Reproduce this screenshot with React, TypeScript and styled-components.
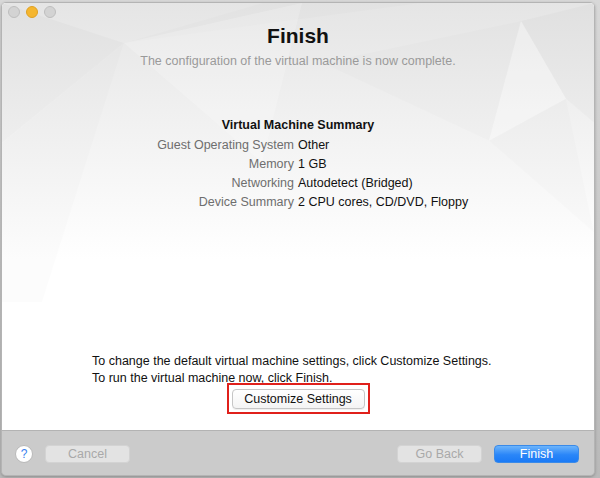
import React from "react";
import styled, { createGlobalStyle } from "styled-components";

const GlobalStyle = createGlobalStyle`
  html, body {
    margin: 0;
    padding: 0;
    background: #c9c9c9;
    font-family: "Liberation Sans", Arial, sans-serif;
  }
  #root {
    width: 600px;
    height: 478px;
    overflow: hidden;
  }
`;

const Desktop = styled.div`
  width: 600px;
  height: 478px;
  padding: 2px 5px 2px 1px;
  box-sizing: border-box;
  background: linear-gradient(#d8d8d8, #b9b9b9);
`;

const Window = styled.div`
  width: 594px;
  height: 474px;
  border-radius: 5px;
  overflow: hidden;
  display: flex;
  flex-direction: column;
  border: 1px solid #b4b4b4;
  box-sizing: border-box;
  box-shadow: 0 1px 3px rgba(0, 0, 0, 0.25);
`;

const Panel = styled.div`
  position: relative;
  flex: 1;
  display: flex;
  flex-direction: column;
  align-items: center;
  background: #ffffff;
  border-bottom: 1px solid #b3b3b3;
  overflow: hidden;
`;

const Backdrop = styled.svg`
  position: absolute;
  inset: 0;
  width: 100%;
  height: 100%;
  z-index: 0;
`;

const Layer = styled.div`
  position: relative;
  z-index: 1;
  width: 100%;
  flex: 1;
  display: flex;
  flex-direction: column;
  align-items: center;
`;

const TitleBar = styled.div`
  align-self: stretch;
  display: flex;
  gap: 6px;
  padding: 3px 0 0 6px;
  height: 12px;
`;

const Light = styled.span<{ $color: string; $edge: string }>`
  width: 12px;
  height: 12px;
  box-sizing: border-box;
  border-radius: 50%;
  background: ${({ $color }) => $color};
  border: 1px solid ${({ $edge }) => $edge};
`;

const Heading = styled.h1`
  margin: 5px 0 4px;
  font-size: 21px;
  line-height: 26px;
  font-weight: 700;
  color: #111;
`;

const Subtitle = styled.p`
  margin: 0;
  font-size: 12.5px;
  line-height: 16px;
  color: #9a9a9a;
`;

const Summary = styled.div`
  margin-top: 47px;
  display: flex;
  flex-direction: column;
  align-items: center;
`;

const SummaryTitle = styled.div`
  font-size: 12.5px;
  font-weight: 700;
  line-height: 19px;
  margin-bottom: 1px;
  color: #111;
`;

const Grid = styled.div`
  display: grid;
  grid-template-columns: 290px 294px;
  column-gap: 4px;
  font-size: 12.5px;
  line-height: 19px;
`;

const Label = styled.span`
  text-align: right;
  color: #6e6e6e;
`;

const Value = styled.span`
  color: #111;
`;

const Instructions = styled.div`
  margin-top: auto;
  align-self: flex-start;
  padding-left: 90px;
  font-size: 12.5px;
  line-height: 17px;
  color: #111;
`;

const Highlight = styled.div`
  margin: -4px 0 16px;
  border: 2px solid #e0201b;
  padding: 4px 3px 3px 3px;
`;

const Button = styled.button<{ $variant?: "plain" | "disabled" | "primary" }>`
  display: flex;
  align-items: center;
  justify-content: center;
  height: 18px;
  padding: 0;
  border-radius: 4px;
  font-family: "Liberation Sans", Arial, sans-serif;
  font-size: 12.5px;
  box-sizing: border-box;
  ${({ $variant = "plain" }) =>
    $variant === "primary"
      ? `
    width: 85px;
    color: #fff;
    background: linear-gradient(#6cb4fb, #2a86f8 55%, #1a7af6);
    border: 1px solid #3a8ae8;
  `
      : $variant === "disabled"
      ? `
    width: 85px;
    color: #a9a9a9;
    background: #e3e3e3;
    border: 1px solid #d3d3d3;
  `
      : `
    width: 133px;
    height: 20px;
    color: #111;
    background: linear-gradient(#ffffff, #f4f4f4);
    border: 1px solid #c6c6c6;
    box-shadow: 0 1px 0 rgba(0,0,0,0.06);
  `}
`;

const Footer = styled.div`
  height: 44px;
  flex-shrink: 0;
  background: #cbcbcb;
  display: flex;
  align-items: center;
  padding: 2px 15px 0 13px;
  box-sizing: border-box;
  gap: 12px;
`;

const Help = styled.span`
  width: 18px;
  height: 18px;
  border-radius: 50%;
  background: #fff;
  border: 1px solid #b9b9b9;
  box-sizing: border-box;
  display: flex;
  align-items: center;
  justify-content: center;
  color: #3a7ff0;
  font-size: 12px;
`;

const Spacer = styled.div`
  flex: 1;
`;

const rows: [string, string][] = [
  ["Guest Operating System", "Other"],
  ["Memory", "1 GB"],
  ["Networking", "Autodetect (Bridged)"],
  ["Device Summary", "2 CPU cores, CD/DVD, Floppy"],
];

export default function App() {
  return (
    <>
      <GlobalStyle />
      <Desktop>
        <Window>
          <Panel>
            <Backdrop viewBox="0 0 592 428" preserveAspectRatio="none">
              <defs>
                <linearGradient id="fade" x1="0" y1="0" x2="0" y2="1">
                  <stop offset="0" stopColor="#e5e5e5" />
                  <stop offset="0.3" stopColor="#f2f2f2" />
                  <stop offset="0.6" stopColor="#ffffff" />
                </linearGradient>
              </defs>
              <rect x="0" y="0" width="592" height="428" fill="url(#fade)" />
              <g fill="#000">
                <polygon points="0,0 122,40 0,140" opacity="0.018" />
                <polygon points="122,40 40,300 0,300 0,140" opacity="0.01" />
                <polygon points="122,40 260,0 420,0" opacity="0.012" />
                <polygon points="519,18 592,0 592,120 564,96" opacity="0.02" />
                <polygon points="519,18 487,138 320,60" opacity="0.012" />
                <polygon points="564,96 487,138 592,230" opacity="0.01" />
              </g>
              <g fill="#fff">
                <polygon points="122,40 300,0 260,160" opacity="0.2" />
                <polygon points="519,18 564,96 487,138" opacity="0.25" />
              </g>
            </Backdrop>
            <Layer>
              <TitleBar>
                <Light $color="#d3d3d3" $edge="#bebebe" />
                <Light $color="#f5b62f" $edge="#dea023" />
                <Light $color="#d3d3d3" $edge="#bebebe" />
              </TitleBar>
              <Heading>Finish</Heading>
              <Subtitle>The configuration of the virtual machine is now complete.</Subtitle>
              <Summary>
                <SummaryTitle>Virtual Machine Summary</SummaryTitle>
                <Grid>
                  {rows.map(([k, v]) => (
                    <React.Fragment key={k}>
                      <Label>{k}</Label>
                      <Value>{v}</Value>
                    </React.Fragment>
                  ))}
                </Grid>
              </Summary>
              <Instructions>
                <div>To change the default virtual machine settings, click Customize Settings.</div>
                <div>To run the virtual machine now, click Finish.</div>
              </Instructions>
              <Highlight>
                <Button>Customize Settings</Button>
              </Highlight>
            </Layer>
          </Panel>
          <Footer>
            <Help>?</Help>
            <Button $variant="disabled">Cancel</Button>
            <Spacer />
            <Button $variant="disabled">Go Back</Button>
            <Button $variant="primary">Finish</Button>
          </Footer>
        </Window>
      </Desktop>
    </>
  );
}
